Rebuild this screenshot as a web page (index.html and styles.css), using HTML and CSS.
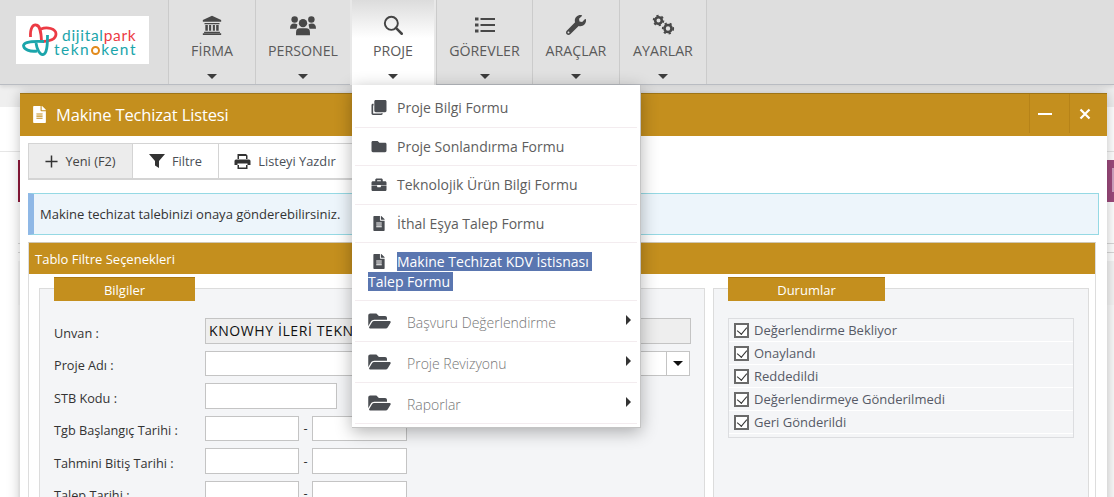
FILE: index.html
```html
<!DOCTYPE html>
<html lang="tr">
<head>
<meta charset="utf-8">
<title>Makine Techizat Listesi</title>
<link rel="stylesheet" href="styles.css">
</head>
<body>
<svg class="defs" width="0" height="0" aria-hidden="true">
  <symbol id="i-file" viewBox="0 0 384 512"><path d="M224 136V0H24C10.7 0 0 10.7 0 24v464c0 13.3 10.7 24 24 24h336c13.3 0 24-10.7 24-24V160H248c-13.2 0-24-10.8-24-24zm64 236c0 6.6-5.4 12-12 12H108c-6.6 0-12-5.4-12-12v-8c0-6.6 5.4-12 12-12h168c6.6 0 12 5.4 12 12v8zm0-64c0 6.6-5.4 12-12 12H108c-6.6 0-12-5.4-12-12v-8c0-6.6 5.4-12 12-12h168c6.6 0 12 5.4 12 12v8zm0-72v8c0 6.6-5.4 12-12 12H108c-6.6 0-12-5.4-12-12v-8c0-6.6 5.4-12 12-12h168c6.6 0 12 5.4 12 12zm96-114.1v6.1H256V0h6.1c6.4 0 12.5 2.5 17 7l97.9 98c4.5 4.5 7 10.6 7 16.9z"/></symbol>
  <symbol id="i-open" viewBox="0 0 576 512"><path d="M572.7 292.1L500.3 416.2A64 64 0 0 1 445 448H45c-18.500 0-30-20-20.700-36l72.400-124.200A64 64 0 0 1 152 256h400c18.500 0 30 20.100 20.700 36.100zM152 224h328v-48c0-26.500-21.500-48-48-48H272l-64-64H48C21.500 64 0 85.500 0 112v278l69.100-118.400C86.200 242.300 118 224 152 224z"/></symbol>
  <symbol id="i-folder" viewBox="0 0 512 512"><path d="M464 128H272l-64-64H48C21.500 64 0 85.500 0 112v288c0 26.500 21.500 48 48 48h416c26.500 0 48-21.500 48-48V176c0-26.500-21.500-48-48-48z"/></symbol>
  <symbol id="i-clone" viewBox="0 0 512 512"><path d="M464 0H144c-26.500 0-48 21.500-48 48v320c0 26.500 21.500 48 48 48h320c26.500 0 48-21.500 48-48V48c0-26.500-21.500-48-48-48zM48 128C21.500 128 0 149.500 0 176v288c0 26.500 21.500 48 48 48h288c26.500 0 48-21.500 48-48v-16h-56v10a6 6 0 0 1-6 6H62a6 6 0 0 1-6-6V190a6 6 0 0 1 6-6h10v-56z"/></symbol>
  <symbol id="i-case" viewBox="0 0 512 512"><path d="M320 336a16 16 0 0 1-16 16h-96a16 16 0 0 1-16-16v-48H0v144c0 25.600 22.400 48 48 48h416c25.600 0 48-22.400 48-48V288H320v48zM464 144h-80V96c0-25.600-22.400-48-48-48H176c-25.600 0-48 22.400-48 48v48H48c-25.600 0-48 22.400-48 48v80h512v-80c0-25.600-22.400-48-48-48zm-144 0H192V112h128v32z"/></symbol>
</svg>

<header class="topbar">
  <div class="logo">
    <svg class="logo-mark" viewBox="21 23 37 33" aria-hidden="true">
      <path class="lm-red" d="M30.500 37 C30 28 33 24.500 36 25 C40 25.500 41 31 41.500 41 M41 29 C47 26.500 56 28.500 56 34 C56 39.500 49 41.500 43 41.500"/>
      <path class="lm-teal" d="M44 41.500 C35 41 24 41.500 23.500 45.500 C23.500 49.500 30 52 37 51 M36 43 C37 50 40 55 43 54.500 C47 54 47.500 45 47.500 35"/>
    </svg>
    <div class="logo-text">
      <div class="logo-l1">dijital<span>park</span></div>
      <div class="logo-l2">tekn<i></i>kent</div>
    </div>
  </div>
  <nav class="nav">
    <a class="nav-item w87">
      <svg class="nav-ico" viewBox="0 0 24 24"><path d="M12 1 L23 6 V8 H1 V6 Z M3 9.500 H21 V11 H3 Z M4 12 H7 V19 H4 Z M8.500 12 H11 V19 H8.500 Z M13 12 H15.500 V19 H13 Z M17 12 H20 V19 H17 Z M2.500 20 H21.500 V21.500 H2.500 Z M1 22 H23 V24 H1 Z"/></svg>
      <span>FİRMA</span><b class="caret"></b>
    </a>
    <a class="nav-item w95">
      <svg class="nav-ico wide" viewBox="0 0 28 22"><circle cx="5" cy="5" r="3.500"/><circle cx="23" cy="5" r="3.500"/><circle cx="14" cy="9" r="4.500"/><path d="M0 15 Q0 9.500 4.500 9.500 Q6.500 9.500 8 10.500 Q7.500 13 7 15 Z M28 15 Q28 9.500 23.500 9.500 Q21.500 9.500 20 10.500 Q20.500 13 21 15 Z M6.500 22 V19 Q6.500 14.500 10.500 14.500 H17.500 Q21.500 14.500 21.500 19 V22 Z"/></svg>
      <span>PERSONEL</span><b class="caret"></b>
    </a>
    <a class="nav-item w86 active">
      <svg class="nav-ico" viewBox="0 0 24 24"><circle class="sr" cx="10" cy="10" r="7.800"/><path class="sl" d="M15.500 15.500 L22.500 22.500"/></svg>
      <span>PROJE</span><b class="caret"></b>
    </a>
    <a class="nav-item w96">
      <svg class="nav-ico" viewBox="0 0 20 20"><path d="M0 2.500 H3.500 V5.500 H0 Z M0 8.500 H3.500 V11.500 H0 Z M0 14.500 H3.500 V17.500 H0 Z M5.500 3 H20 V5 H5.500 Z M5.500 9 H20 V11 H5.500 Z M5.500 15 H20 V17 H5.500 Z"/></svg>
      <span>GÖREVLER</span><b class="caret"></b>
    </a>
    <a class="nav-item w87">
      <svg class="nav-ico" viewBox="0 0 512 512"><path d="M507.700 109.100c-2.200-9-13.500-12.100-20.100-5.500l-74.400 74.400-67.900-11.300-11.300-67.900 74.400-74.400c6.600-6.600 3.400-17.900-5.700-20.200-47.400-11.700-99.300 1-136.200 37.900-39.500 39.500-50.500 96.600-33.900 146.300L18.700 403.300c-25 25-25 65.500 0 90.500 25 25 65.500 25 90.500 0l214.900-214.900c49.800 16.600 106.800 5.500 146.500-34.200 36.900-36.900 49.600-89 37.100-135.600zM64 472c-13.300 0-24-10.700-24-24 0-13.300 10.700-24 24-24s24 10.700 24 24c0 13.300-10.700 24-24 24z"/></svg>
      <span>ARAÇLAR</span><b class="caret"></b>
    </a>
    <a class="nav-item w88 last">
      <svg class="nav-ico wide" viewBox="0 0 26 22">
        <circle class="g-ring" cx="8.500" cy="6.500" r="3.300"/><circle class="g-teeth" cx="8.500" cy="6.500" r="4.900"/>
        <circle class="g-ring" cx="18" cy="14.500" r="3.500"/><circle class="g-teeth" cx="18" cy="14.500" r="5.200"/>
      </svg>
      <span>AYARLAR</span><b class="caret"></b>
    </a>
  </nav>
</header>

<div class="backdrop"></div>
<i class="behind-red"></i>
<i class="behind-purple"></i>

<main class="window">
  <div class="win-title">
    <svg class="win-ico" aria-hidden="true"><use href="#i-file"/></svg>
    <h1>Makine Techizat Listesi</h1>
    <div class="win-btns">
      <button class="win-btn"><i class="min"></i></button>
      <button class="win-btn two"><svg class="close" viewBox="0 0 12 12"><path d="M1.500 1.500 L10.500 10.500 M10.500 1.500 L1.500 10.500"/></svg></button>
    </div>
  </div>
  <div class="win-body">
    <div class="toolbar">
      <button class="tool first"><svg class="t-ico" viewBox="0 0 14 14"><path d="M6.200 0.500 H7.800 V6.200 H13.500 V7.800 H7.800 V13.500 H6.200 V7.800 H0.500 V6.200 H6.200 Z"/></svg>Yeni (F2)</button>
      <button class="tool"><svg class="t-ico t-fil" viewBox="0 0 16 14"><path d="M0 0 H16 L10 7 V14 L6 11.500 V7 Z"/></svg>Filtre</button>
      <button class="tool"><svg class="t-ico t-pr" viewBox="0 0 16 15"><path d="M3 0 H11.500 L13 1.500 V5 H11.500 V2 H4.500 V5 H3 Z M1.500 5.500 H14.500 Q16 5.500 16 7 V11 H13 V9.500 H3 V11 H0 V7 Q0 5.500 1.500 5.500 Z M3 11 V15 H13 V11 H11.500 V13.500 H4.500 V11 Z"/></svg>Listeyi Yazdır</button>
    </div>
    <div class="notice">Makine techizat talebinizi onaya gönderebilirsiniz.</div>
    <section class="filter">
      <div class="filter-head">Tablo Filtre Seçenekleri</div>
      <div class="filter-body">
        <fieldset class="fs fs-info">
          <div class="fs-tab tab-info">Bilgiler</div>
          <div class="row"><label>Unvan :</label><input class="inp full ro" value="KNOWHY İLERİ TEKNOLOJİ" readonly></div>
          <div class="row"><label>Proje Adı :</label><div class="combo"><input class="inp grow"><span class="combo-btn"><b class="caret dark"></b></span></div></div>
          <div class="row"><label>STB Kodu :</label><input class="inp stb"></div>
          <div class="row"><label>Tgb Başlangıç Tarihi :</label><input class="inp date"><span class="dash">-</span><input class="inp date"></div>
          <div class="row"><label>Tahmini Bitiş Tarihi :</label><input class="inp date"><span class="dash">-</span><input class="inp date"></div>
          <div class="row"><label>Talep Tarihi :</label><input class="inp date"><span class="dash">-</span><input class="inp date"></div>
        </fieldset>
        <fieldset class="fs fs-state">
          <div class="fs-tab tab-state">Durumlar</div>
          <ul class="checks">
            <li><i class="cb"></i>Değerlendirme Bekliyor</li>
            <li><i class="cb"></i>Onaylandı</li>
            <li><i class="cb"></i>Reddedildi</li>
            <li><i class="cb"></i>Değerlendirmeye Gönderilmedi</li>
            <li><i class="cb"></i>Geri Gönderildi</li>
          </ul>
        </fieldset>
      </div>
    </section>
  </div>
</main>

<div class="menu">
  <a class="m-item"><svg class="m-ico" aria-hidden="true"><use href="#i-clone"/></svg>Proje Bilgi Formu</a>
  <a class="m-item"><svg class="m-ico" aria-hidden="true"><use href="#i-folder"/></svg>Proje Sonlandırma Formu</a>
  <a class="m-item"><svg class="m-ico" aria-hidden="true"><use href="#i-case"/></svg>Teknolojik Ürün Bilgi Formu</a>
  <a class="m-item"><svg class="m-ico" aria-hidden="true"><use href="#i-file"/></svg>İthal Eşya Talep Formu</a>
  <a class="m-item sel"><svg class="m-ico" aria-hidden="true"><use href="#i-file"/></svg><mark>Makine Techizat KDV İstisnası Talep Formu</mark></a>
  <a class="m-sub"><svg class="s-ico" aria-hidden="true"><use href="#i-open"/></svg>Başvuru Değerlendirme<b class="arrow"></b></a>
  <a class="m-sub"><svg class="s-ico" aria-hidden="true"><use href="#i-open"/></svg>Proje Revizyonu<b class="arrow"></b></a>
  <a class="m-sub"><svg class="s-ico" aria-hidden="true"><use href="#i-open"/></svg>Raporlar<b class="arrow"></b></a>
</div>
</body>
</html>
```
FILE: styles.css
```css
* { box-sizing: border-box; }
html, body { margin: 0; height: 497px; overflow: hidden; }
body {
  position: relative;
  background: #fff;
  font-family: "Open Sans", "Noto Sans", sans-serif;
  color: #333;
  font-size: 13px;
}
.defs { position: absolute; }

/* top bar */
.topbar {
  height: 85px;
  display: flex;
  background: #dedede;
  border-bottom: 1px solid #b9bcc2;
  position: relative;
  z-index: 2;
  box-shadow: 0 2px 4px rgba(0,0,0,.1);
}
.logo {
  width: 133px; height: 48px;
  margin: 16px 19px 0 16px;
  background: #fff;
  display: flex;
  padding: 7px 0 0 5px;
  flex: none;
}
.logo-mark { width: 37px; height: 33px; flex: none; }
.lm-red, .lm-teal { fill: none; stroke-width: 2.800; }
.lm-red { stroke: #ec3b44; }
.lm-teal { stroke: #1ba5ab; }
.logo-text { margin-left: -4px; font-family: "Lato", sans-serif; }
.logo-l1 { color: #1ba5ab; font-size: 15.500px; line-height: 15px; margin: 5px 0 0 8px; letter-spacing: .7px; }
.logo-l1 span { color: #ec3b44; }
.logo-l2 { color: #1ba5ab; font-size: 15.500px; line-height: 13px; display: flex; align-items: center; letter-spacing: 1.500px; }
.logo-l2 i { width: 9px; height: 9px; border: 2.500px solid #e28a1c; border-radius: 50%; margin: 2px 1px 0; background: #fff; }

.nav { display: flex; height: 84px; }
.nav-item {
  display: flex;
  flex-direction: column;
  align-items: center;
  border-left: 1px solid #cbcbcb;
  background: #e1e1e1;
  color: #5a5a5a;
  font-size: 14.200px;
  padding-top: 14px;
  position: relative;
}
.nav-item.last { border-right: 1px solid #cbcbcb; }
.nav-item > span { margin-top: 5px; line-height: 20px; }
.w87 { width: 87px; }
.w88 { width: 88px; }
.w95 { width: 95px; }
.w86 { width: 86px; }
.w96 { width: 96px; }
.nav-item.active { background: linear-gradient(#dcdcdc 0, #fff 45%, #fff 100%); height: 85px; border-left: 2px solid #e8e8e8; border-right: 2px solid #e8e8e8; }
.nav-ico { width: 20px; height: 22px; fill: #484848; flex: none; }
.nav-ico.wide { width: 26px; }
.sr { fill: none; stroke: #444; stroke-width: 2.300; }
.sl { fill: none; stroke: #444; stroke-width: 3; stroke-linecap: round; }
.g-ring { fill: none; stroke: #484848; stroke-width: 2.600; }
.g-teeth { fill: none; stroke: #484848; stroke-width: 1.800; stroke-dasharray: 2.200 2.900; }
.caret {
  width: 0; height: 0;
  border-left: 5.500px solid transparent;
  border-right: 5.500px solid transparent;
  border-top: 5.500px solid #3c3c3c;
  margin-top: 13px;
}
.caret.dark { border-top-color: #111; margin: 0; }

/* page behind the window */
.backdrop {
  position: absolute; left: 0; right: 0; top: 85px; height: 412px;
  background:
    linear-gradient(to bottom, transparent 0, transparent 118px, #fff 118px) left top / 18px 100% no-repeat,
    linear-gradient(to bottom,
    #efefef 0, #efefef 22px, #fff 22px, #fff 66px, #e6e6e6 66px, #e6e6e6 67px,
    #fff 67px, #fff 158px, #d8d8d8 158px, #d8d8d8 159px, #fff 159px, #fff 167px,
    #d8d8d8 167px, #d8d8d8 168px, #fff 168px, #fff 176px, #f5f5f5 176px, #f5f5f5 220px, #fafafa 220px);
}
.behind-red { position: absolute; left: 18px; top: 160px; width: 3px; height: 42px; background: #8f1a3c; }
.behind-purple { position: absolute; left: 1107px; top: 160px; width: 7px; height: 42px; background: #9c4a7c; }
.behind-purple::after { content: ""; position: absolute; left: 5px; top: 8px; width: 2px; height: 24px; background: #cfa0bf; }

/* window */
.window {
  margin: 8px 7px 0 20px;
  box-shadow: 0 0 12px rgba(0,0,0,.25);
  position: relative;
  background: #fff;
  height: 420px;
}
.win-title {
  height: 43px;
  background: #c48f1e;
  border-top: 1px solid #9e7416;
  display: flex;
  align-items: center;
  color: #fff;
  padding: 0 0 2px 13px;
}
.win-ico { width: 13px; height: 17px; fill: #fff; margin-right: 10px; }
.win-title h1 { font-size: 16.500px; font-weight: 400; margin: 0; flex: 1; letter-spacing: -.15px; }
.win-btns { display: flex; height: 39px; align-self: flex-start; }
.win-btn { width: 40px; height: 39px; background: transparent; border: 0; border-left: 1px solid #b78318; padding: 0 0 0 8px; display: flex; align-items: center; justify-content: flex-start; }
.win-btn.two { width: 38px; padding-left: 9px; }
.min { width: 14px; height: 2px; background: #fff; display: block; }
.close { width: 12px; height: 12px; fill: none; stroke: #fff; stroke-width: 2.200; }

.win-body { padding: 7px 8px 0 8px; }
.toolbar { display: flex; height: 37px; border: 1px solid #d4d4d4; border-bottom-width: 2px; width: 330px; margin-bottom: 13px; }
.tool {
  font: inherit; font-size: 12.800px; color: #4a4f57; background: #fff; border: 0;
  border-right: 1px solid #d4d4d4;
  display: flex; align-items: center; justify-content: center; gap: 7px;
  padding: 0; width: 86px; flex: none;
}
.tool.first { background: #ececec; width: 104px; color: #444; }
.tool:nth-child(3) { width: 138px; padding-right: 5px; }
.t-ico { width: 13px; height: 13px; fill: #333; flex: none; }
.t-fil { width: 16px; height: 14px; }
.t-pr { width: 17px; height: 15px; }

.notice {
  height: 42px;
  border: 1px solid #95d9e4;
  border-left: 6px solid #8fb8e6;
  background: #edf5fb;
  color: #333;
  font-size: 13px;
  line-height: 41px;
  padding-left: 6px;
  margin-bottom: 7px;
}
.filter { border: 1px solid #ddd; border-top-color: #cfc7b4; margin-right: 3px; background: #fff; height: 280px; }
.filter-head { height: 31px; background: #c48f1e; color: #fff; font-size: 13px; line-height: 33px; padding-left: 6px; }
.filter-body { display: flex; gap: 8px; padding: 14px 0 0 10px; }
.fs { margin: 0; padding: 0; border: 1px solid #dcdcdc; background: #f4f5f7; position: relative; height: 260px; min-width: 0; flex: none; }
.fs-info { width: 666px; padding-top: 29px; }
.fs-state { width: 376px; padding: 29px 14px 0 14px; }
.fs-tab {
  position: absolute; top: -12px; height: 24px; background: #c48f1e; color: #fff;
  border-top: 1px solid #ad7a12;
  text-align: center; font-size: 13px; line-height: 25px;
}
.tab-info { left: 14px; width: 141px; }
.tab-state { left: 14px; width: 157px; }

.row { display: flex; align-items: center; height: 25.500px; margin-bottom: 7px; padding-left: 14px; color: #333; font-size: 12.700px; }
.row label { width: 151px; flex: none; padding-top: 4px; }
.inp { height: 25.500px; border: 1px solid #c4c4c4; background: #fff; padding: 0 3px; font: inherit; color: #111; flex: none; margin: 0; border-radius: 0; }
.inp.full { width: 486px; }
.inp.ro { background: #eee; font-size: 14px; letter-spacing: .6px; }
.combo { display: flex; width: 485px; }
.inp.grow { flex: 1; min-width: 0; }
.combo-btn { width: 23px; height: 25.500px; border: 1px solid #c4c4c4; border-left: 0; background: #fff; display: flex; align-items: center; justify-content: center; flex: none; }
.inp.stb { width: 132px; }
.inp.date { width: 94px; }
.dash { width: 13px; text-align: center; flex: none; }
.row .inp.date + .dash + .inp.date { width: 95px; }

.checks { list-style: none; margin: 0; padding: 0 0 3px; border: 1px solid #dcdde0; width: 346px; }
.checks li { height: 23px; border-bottom: 1px solid #fff; display: flex; align-items: center; gap: 5px; padding-left: 5px; color: #565a66; font-size: 13px; }
.cb { width: 15px; height: 15px; border: 2px solid #6a6a6a; background: #fff; position: relative; flex: none; }
.cb::after { content: ""; position: absolute; left: 3px; top: 0; width: 5px; height: 8px; border: solid #333; border-width: 0 1.500px 1.500px 0; transform: rotate(40deg); }

/* dropdown */
.menu {
  position: absolute;
  z-index: 3;
  left: 352px; top: 85px;
  width: 289px; height: 343px;
  background: #fff;
  border-right: 1px solid #c4c4c4;
  border-bottom: 1px solid #c4c4c4;
  box-shadow: 0 4px 16px rgba(0,0,0,.3);
  padding: 4px 3px 0;
  color: #5e5e5e;
  font-size: 14px;
}
.m-item, .m-sub { display: block; border-bottom: 1px solid #f3ecef; position: relative; }
.m-item { height: 38.500px; line-height: 38px; padding-left: 16px; white-space: nowrap; }
.m-ico { width: 16px; height: 15px; fill: #4a4d52; margin-right: 10px; vertical-align: -2px; }
.m-item.sel { height: 58px; white-space: normal; line-height: 20px; padding: 9px 40px 0 13px; }
.sel .m-ico { margin-left: 3px; margin-right: 10px; }
mark { background: #5a76b0; color: #fff; padding-right: 3px; box-decoration-break: clone; -webkit-box-decoration-break: clone; }
.m-sub { height: 41px; line-height: 43px; padding-left: 52px; color: #777; font-weight: 300; }
.s-ico { position: absolute; left: 13px; top: 10px; width: 23px; height: 20px; fill: #4a4d52; }
.arrow { position: absolute; right: 6px; top: 14px; width: 0; height: 0; border-top: 5px solid transparent; border-bottom: 5px solid transparent; border-left: 5px solid #333; }
```
